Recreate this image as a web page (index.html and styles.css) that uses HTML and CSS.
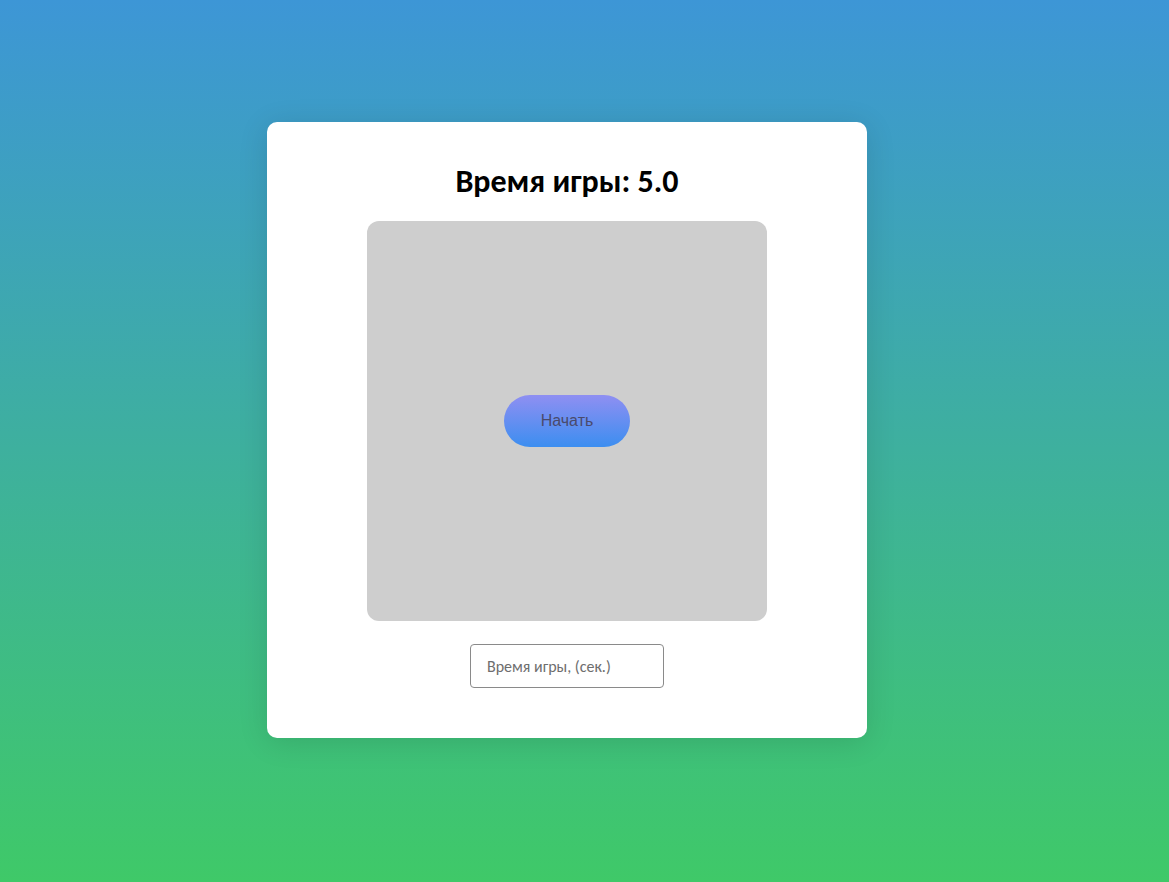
FILE: index.html
```html
<!DOCTYPE html>
<html lang="ru">
<head>
<meta charset="utf-8">
<title>Игра</title>
<link rel="stylesheet" href="styles.css">
</head>
<body>
<main class="page">
  <section class="card">
    <h1 class="title">Время игры: <span class="time">5.0</span></h1>
    <div class="game">
      <button class="start">Начать</button>
    </div>
    <input class="duration" type="number" placeholder="Время игры, (сек.)">
  </section>
</main>
</body>
</html>
```
FILE: styles.css
```css
html, body {
  margin: 0;
  height: 100%;
}
body {
  background: linear-gradient(to bottom, #3d96d6 0%, #3fc968 100%);
  font-family: "Carlito", Lato, "Open Sans", "Liberation Sans", sans-serif;
}
.page {
  padding: 122px 0 0 267px;
  box-sizing: border-box;
}
.card {
  width: 600px;
  height: 616px;
  box-sizing: border-box;
  background: #fff;
  border-radius: 10px;
  box-shadow: 0 4px 30px rgba(0, 0, 0, 0.12);
  display: flex;
  flex-direction: column;
  align-items: center;
  padding-top: 40px;
}
.title {
  margin: 0 0 19px;
  font-size: 32px;
  line-height: 40px;
  font-weight: 700;
  color: #000;
}
.game {
  width: 400px;
  height: 400px;
  background: #cecece;
  border-radius: 12px;
  display: flex;
  align-items: center;
  justify-content: center;
}
.start {
  width: 126px;
  height: 52px;
  border: none;
  border-radius: 26px;
  background: linear-gradient(to bottom, #8f8ff2 0%, #3c8ef0 100%);
  color: #4a4a6c;
  font-family: "Liberation Sans", Arial, sans-serif;
  font-size: 16px;
  cursor: pointer;
}
.duration {
  margin-top: 23px;
  width: 194px;
  height: 44px;
  box-sizing: border-box;
  border: 1px solid #8a8a8a;
  border-radius: 4px;
  padding: 0 16px;
  font-family: "Carlito", Lato, "Open Sans", "Liberation Sans", sans-serif;
  font-size: 16px;
  color: #333;
  background: #fff;
}
.duration::placeholder {
  color: #6e6e6e;
}
```
